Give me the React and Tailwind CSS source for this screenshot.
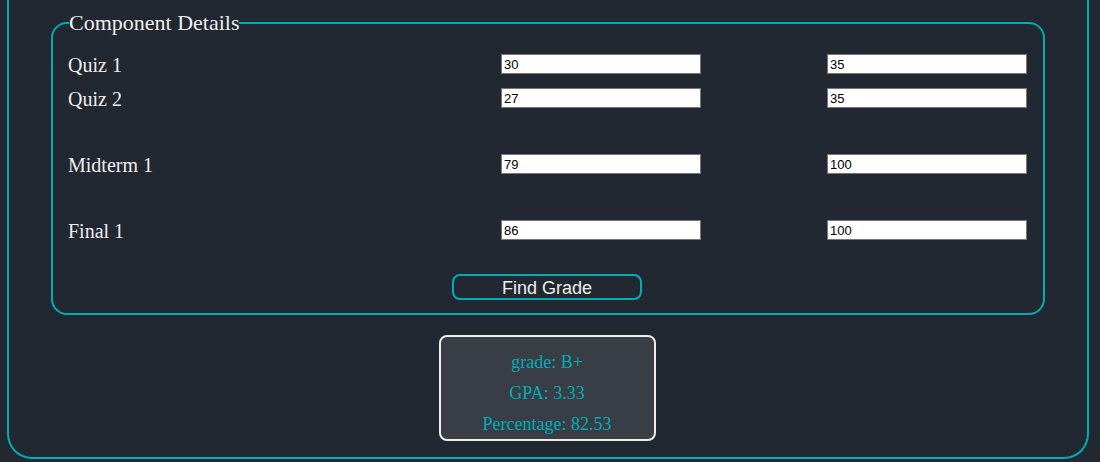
import React from "react";

const serif = { fontFamily: '"Liberation Serif", "Times New Roman", serif' };

function Row({ label, a, b }) {
  return (
    <div className="flex h-[34px] items-center">
      <div className="w-[433px] pt-[1px] text-[20px] leading-[24px] text-[#eeeeee]" style={serif}>{label}</div>
      <input
        defaultValue={a}
        className="h-[20px] w-[200px] border border-[#767676] bg-white px-[2px] text-[13px] text-black outline-none font-['Liberation_Sans',Arial,sans-serif]"
      />
      <div className="w-[126px]" />
      <input
        defaultValue={b}
        className="h-[20px] w-[200px] border border-[#767676] bg-white px-[2px] text-[13px] text-black outline-none font-['Liberation_Sans',Arial,sans-serif]"
      />
    </div>
  );
}

export default function App() {
  return (
    <div className="h-[462px] w-[1100px] overflow-hidden bg-[#222831]">
      <div className="ml-[7px] h-[459px] w-[1082px] rounded-b-[25px] border-2 border-t-0 border-[#00adb5] px-[42px] pt-[11px]">
        <fieldset className="rounded-[16px] border-2 border-[#00adb5] px-[15px] pb-[13px]">
          <legend className="ml-[1px] text-[22px] leading-[23px] text-[#eeeeee]" style={serif}>Component Details</legend>
          <div className="pt-[13px]">
            <Row label="Quiz 1" a="30" b="35" />
            <Row label="Quiz 2" a="27" b="35" />
            <div className="h-[32px]" />
            <Row label="Midterm 1" a="79" b="100" />
            <div className="h-[32px]" />
            <Row label="Final 1" a="86" b="100" />
            <div className="mt-[27px] flex justify-center">
              <button className="ml-[-2px] h-[26px] w-[190px] rounded-[8px] border-2 border-[#00adb5] bg-transparent pt-[2px] text-[18px] leading-none text-[#eeeeee] font-['Liberation_Sans',Arial,sans-serif]">
                Find Grade
              </button>
            </div>
          </div>
        </fieldset>
        <div className="mt-[20px] flex justify-center">
          <div className="ml-[-2px] flex h-[106px] w-[217px] flex-col items-center rounded-[8px] border-2 border-[#eeeeee] bg-[#393e46] pt-[10px] text-[18px] leading-[31px] text-[#00adb5]" style={serif}>
            <div>grade: B+</div>
            <div>GPA: 3.33</div>
            <div>Percentage: 82.53</div>
          </div>
        </div>
      </div>
    </div>
  );
}
